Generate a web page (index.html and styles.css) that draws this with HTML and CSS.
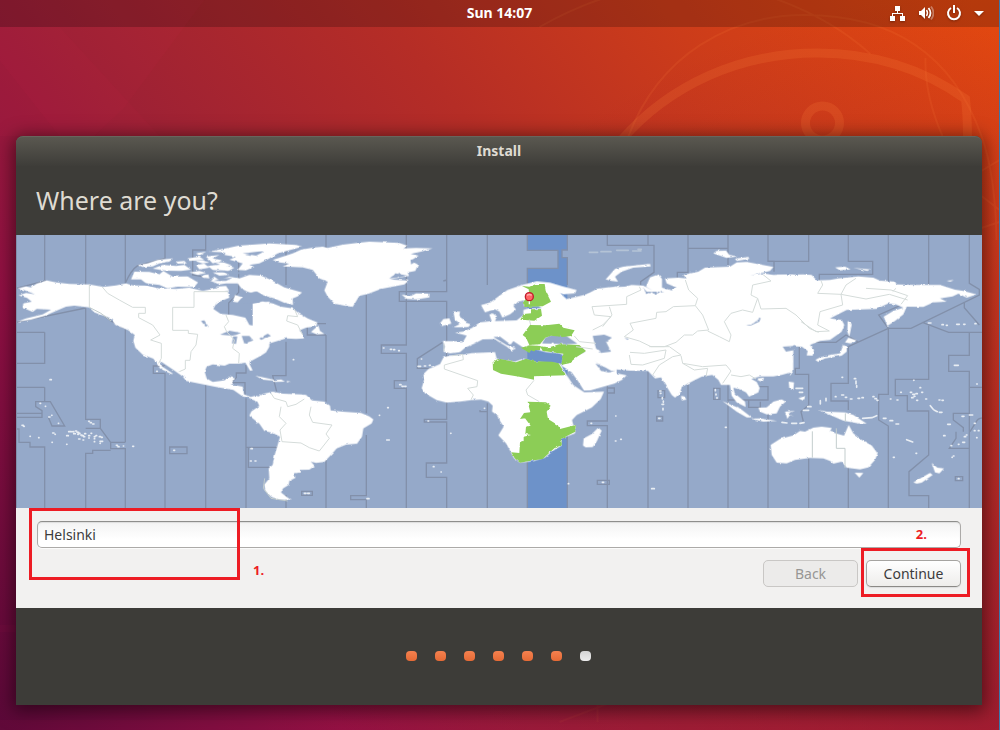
FILE: index.html
```html
<!DOCTYPE html>
<html lang="en">
<head>
<meta charset="utf-8">
<title>Install</title>
<link rel="stylesheet" href="styles.css">
</head>
<body>
<svg class="wallpaper" viewBox="0 0 1000 730" preserveAspectRatio="xMidYMid slice" aria-hidden="true">
  <path class="facet" d="M0 0H205L125 107L95 136H0z"/>
  <path class="facet" d="M0 60L60 136H160L60 27H0z"/>
  <path class="facet" d="M0 720H1000V730H0zM0 625H16V632H0z"/>
  <g class="line-art">
    <path class="thin" d="M540 27Q640-30 740-12Q820 8 871 54M629 136C660 55 730 15 805 15C900 15 955 60 982 136Q996 175 997 240M926 58Q925 95 943 136M980 172L1000 160M982 196L1000 210M982 228L1000 222"/>
    <path class="faint" d="M560 722L610 703M598 703V722"/>
    <path class="thick" d="M622 140C670 85 740 53 818 53C875 53 925 70 966 99Q968 115 968 140"/>
    <circle class="thick" cx="823" cy="123" r="17"/>
  </g>
</svg>

<header class="topbar">
  <time class="clock">Sun 14:07</time>
  <div class="indicators">
    <svg class="icon" width="16" height="16" viewBox="0 0 16 16" role="img" aria-label="Network"><path fill="#fff" d="M5 1h5v5H8v2h5v3h2v5h-5v-5h2V9H3v2h2v5H0v-5h2V8h5V6H5z"/></svg>
    <svg class="icon" width="16" height="16" viewBox="0 0 16 16" role="img" aria-label="Volume"><path fill="#fff" d="M1 6h2l4-4v12L3 10H1z"/><path fill="none" stroke="#fff" stroke-width="1.4" d="M8.500 5q2 3 0 6"/><path fill="none" stroke="#fff" stroke-width="1.800" d="M10.500 3q4 5 0 10"/><path fill="none" stroke="#fff" stroke-opacity=".35" stroke-width="1.800" d="M13 1.500q5 6.500 0 13"/></svg>
    <svg class="icon" width="16" height="16" viewBox="0 0 16 16" role="img" aria-label="Power"><path fill="none" stroke="#fff" stroke-width="2" d="M5 3A6 6 0 1 0 11 3M8 0V8"/></svg>
    <svg class="icon" width="10" height="16" viewBox="0 0 10 16" aria-hidden="true"><path fill="#fff" d="M0 6h10L5 11z"/></svg>
  </div>
</header>

<main class="desktop">
<section class="window">
  <div class="titlebar">Install</div>
  <h1 class="heading">Where are you?</h1>

  <svg class="map" viewBox="0 0 2898 819" role="img" aria-label="Time zone map">
    <rect class="sea" width="2898" height="819"/>
    <path class="selected" d="M1534 0H1654V45H1638V68H1654V819H1534V100H1626V46H1534z"/>
    <g class="zones">
      <path d="M1 0V819M86 0V140M86 292V385H0V292H86M86 457V500H59V515L78 527V547H0M0 457H86M86 500H103L146 573H108L97 547M0 535H78M0 582H9V622H42V636H86V819M209 0V150M209 218V553H253V580H209M253 580L284 622H328M284 622V641H328V819M284 646H230V655H209V819M328 0V145M328 282V622M328 145Q345 105 365 92L447 70V0M447 393H412V415H447V819M569 0V45H530V120L575 128M569 450V819M461 636H513V656H461zM690 390V414H661V428L645 443H687V480M690 490V819M690 637H785M697 637V697H760M668 35V172L638 204V260M0 160L90 137M0 262L209 219M255 235L285 258L325 280"/>
      <path d="M810 0V150M810 320V422H770L782 470M810 780V819M930 0V125M930 300V500M930 640V819M874 266H930M874 266V300H930M1051 180V535M1051 600V782H1004V794H1051V819M1171 0V330H1096V355H1171V437H1135V460H1171V819M1292 0V170H1150V199H1292V553H1225V561H1292V684H1231V727H1292V819M857 769H889V781H857zM1280 322L1204 371V400H1240M1282 138L1292 135"/>
      <path d="M1414 0V150M1414 505V530H1392V525M1414 530V819M1534 0V46H1626V100H1534V150M1534 665V819M1654 0V45H1638V68H1654V150M1654 468V819M1774 0V31H1914V112L1874 140V150M1774 452V558H1714V572H1774V819M1774 459H1795V474H1774M1744 736H1780V748H1744zM1896 0V31M1896 410V819M2016 0V40H2136V0M2016 40V112H1984V128M2016 440V819M2136 40V90M2136 440V495H2256V455H2230M2136 495V819M2198 495V517H2233V500M2256 0V79H2274V110M2256 520V819M1926 467H1946V488H1926zM1922 544H1940V558H1922zM2093 460H2112V493H2093z"/>
      <path d="M2256 79H2378V0M2497 0V79H2570V118H2410V135M2378 590V819M2497 600V819M2617 0V140M2617 280V478H2588V555L2617 573V819M2738 0V150M2738 272V433H2638V482H2674V528H2738V660L2679 710V782H2738V819M2860 0V145L2890 163V180L2685 280H2617L2588 240L2660 208M2719 262L2798 292H2898M2845 200V218L2890 270M2860 292V361H2798V409H2860V457H2898M2860 457V819M2350 335V400H2338V418H2378V510L2355 530L2362 560M2497 335V445H2445V498H2497V525M2497 335L2617 280M2380 322H2460L2490 300L2525 320M2860 535H2812V555L2842 578V590M2820 590V610L2800 640H2860M2898 549Q2885 550 2881 560L2862 590M2818 725H2840V737H2818z"/>
    </g>

    <g class="land" filter="url(#coast)">
      <path d="M5 160L30 154L45 157L62 146L92 136L120 142L160 147L220 148L262 156L300 151L330 145L350 151L395 152L430 160L480 162L520 158L560 168L600 160L636 170L640 188L602 204L592 222L614 237L650 240L688 248L700 270L716 273L722 262L718 242L737 235L727 215L742 203L760 199V335L750 352L735 362L703 379L700 386L710 406L702 407L688 383L670 386L640 386L626 392L590 388L572 395L566 410L572 430L590 441L625 436L640 426L657 430L645 448L680 455L684 478L704 486L720 482L736 488L730 500L712 492L680 484L652 465L600 456L570 450L510 438L500 424L470 403L432 378L438 394L472 417L465 417L432 400L412 371L380 359L358 338L352 318L356 300L335 285L298 270L285 250L235 232L220 217L175 212L150 215L120 228L88 242L45 254L2 261L30 250L80 238L105 224L62 222L50 231L20 218L22 205L47 200L33 189L8 181L30 174L58 178L23 165z"/>
      <path d="M345 133L355 110L400 111L430 118L442 108L470 125L515 124L546 142L535 156L485 155L455 160L430 150L390 145L375 133zM365 90L395 85L425 75L471 70L460 80L430 85L410 94L380 96zM410 101L440 90L480 93L505 90L525 104L495 108L450 107zM515 70L550 65L565 75L520 78zM540 55L570 50L550 62zM570 65L610 60L590 70L620 77L590 85zM578 50L640 38L668 32L760 25L840 30L859 35L815 47L785 55L760 70L730 85L700 90L715 96L690 106L665 105L680 85L640 74L660 66L625 60L630 52zM540 90L565 86L580 98L550 103zM575 93L620 88L655 98L635 110L590 105zM556 122L577 118L580 130L560 128zM582 137L595 125L612 138L640 125L670 130L700 120L735 122L765 135L805 157L858 172L845 184L830 190L831 210L804 203L775 190L743 181L723 170L705 174L680 165L665 145L630 145L610 148zM600 155L630 153L640 168L610 168zM657 180L680 187L665 202L650 200z"/>
      <path d="M535 78L560 76L580 82L560 85zM590 80L625 83L650 92L620 92zM520 112L550 108L570 114L545 120zM590 112L625 112L640 120L610 122zM610 45L640 44L660 50L630 56zM480 80L505 78L512 85L485 86z"/>
      <path d="M710 206L740 199L770 205L795 215L830 220L845 232L875 250L904 262L900 274L870 278L850 286L862 297L864 310L840 312L810 310L785 318L760 325L745 345L710 366zM885 291L907 271L912 288L925 297L903 298z"/>
      <path d="M770 75L830 55L855 44L890 38L920 35L935 39L980 29L1030 23L1060 20L1150 24L1175 33L1162 40L1200 39L1250 40L1215 50L1184 57L1208 62L1184 77L1206 89L1198 108L1175 112L1179 123L1122 133L1178 137L1165 148L1130 155L1095 162L1060 175L1030 183L1010 216L990 213L955 206L935 185L925 166L935 140L910 130L890 105L860 97L800 94L820 86L790 82zM1157 179L1185 183L1200 175L1240 176L1240 187L1200 193L1172 192z"/>
      <path d="M700 490L720 492L735 478L770 470L800 476L855 478L870 480L888 496L925 500L942 512L944 526L980 530L1035 534L1060 544L1072 553L1067 565L1042 580L1038 605L1023 626L990 629L962 640L945 660L925 681L900 684L885 680L896 693L880 704L850 705L853 712L835 715L838 729L820 738L818 750L801 760L795 772L812 786L824 794L790 795L765 785L748 768L745 748L760 730L758 700L770 690L776 660L785 630L792 605L770 594L745 588L730 566L710 550L700 542L706 529L730 513L724 500z"/>
      <path d="M718 422L770 433L780 438L740 434zM770 436L795 433L807 440L775 441zM812 438L824 440L814 443z"/>

      <g transform="translate(1152)">
        <path d="M128 318L190 319L200 302L165 293L190 290L215 279L240 262L275 258L268 239L278 235L291 244L285 258L350 256L370 240L370 225L385 220L425 219L415 213L372 214V196L355 200L340 213L348 224L330 238L307 248L298 230L285 223L255 232L243 210L270 203L300 181L322 165L365 150L410 139L450 143L485 153L530 165L525 175L490 178L480 174L500 192L545 182L600 166L650 155V440L575 360L550 348L530 362L503 390L484 388L490 365L470 355L440 352L415 345L388 350L365 335L340 318L332 329L300 305L280 306L320 330L348 340L335 347L320 335L283 312L248 313L225 325L196 338L180 351L150 355L130 350L135 335zM160 230L180 230L178 242L190 250L197 263L212 268L205 276L160 277L178 268L173 260L165 255zM120 265L130 252L148 250L154 266L125 273z"/>
        <path d="M148 362L182 360L215 354L285 351L290 371L310 375L345 380L370 371L400 378L440 382L480 386L500 420L520 450L553 472L612 470L602 492L575 518L530 540L516 555L520 570L527 574L525 595L485 610L485 632L462 645L435 668L400 678L360 683L342 670L333 652L318 625L295 601L311 575L300 558L297 545L276 530L278 512L265 500L243 494L215 495L180 500L140 503L110 495L75 475L65 460L72 435L67 420L85 402L120 387L130 368z"/>
        <path d="M482 391L503 384L530 362L560 348L600 392L625 410L680 421L665 435L643 446L572 466L552 467L535 440L515 412zM549 632L551 610L575 597L595 578L605 587L590 620L578 636L557 637z"/>
      </g>
      <g transform="translate(1722)">
        <path d="M-10 178L20 162L52 157L105 155L125 150L160 152L190 168L168 155L180 127L205 118L216 132V158L245 166L260 158L230 145L225 130L265 128L290 130L280 120L325 110L345 98L420 95L440 82L470 81L550 96L540 108L480 122L520 115L550 120L610 119V410L575 420L550 424L510 424L484 432L500 441L509 459L505 472L477 485L468 472L450 463L430 458L434 475L465 500L467 516L440 502L425 482L420 450L393 450L385 435L367 420L335 425L305 440L275 456L270 475L255 488L245 480L224 445L213 427L195 430L174 408L120 407L85 404L58 400L40 394L20 384L0 370L-10 358z"/>
        <path d="M47 133L75 102L100 95L150 90L180 87L182 94L130 98L95 110L75 125L84 140L65 138zM380 48L408 47L418 60L443 64L410 69L370 55zM435 71L475 66L478 72L440 78zM273 483L283 484L289 494L275 496zM397 498L420 508L450 520L485 547L470 547L440 530zM482 551L510 550L562 558L520 560zM505 518L530 517L550 500L575 493L587 500L570 515L560 535L530 538L510 530zM503 430L522 428L518 440L505 437z"/>
      </g>
      <g transform="translate(2292)">
        <path d="M-10 120L70 118L95 120L110 136L150 135L175 130L235 124L280 128L300 137L345 140L350 148L405 150L480 150L525 164L550 168L590 178L560 188L535 176L518 184L480 190L500 200L460 202L430 216L380 215L370 238L345 258L322 273L311 245L340 228L370 218L348 208L325 205L290 222L200 225L150 250L185 255L193 270L185 290L150 315L120 318L90 330L102 345L98 362L80 361L83 348L65 335L45 334L5 342L30 360L38 380L20 405L-10 415z"/>
        <path d="M-25 660L-28 630L0 612L40 601L60 588L75 590L100 578L125 575L155 579L150 590L192 602L206 570L220 595L245 615L275 631L293 655L285 675L265 697L240 703L200 698L185 680L160 686L150 678L130 670L90 669L45 675L20 685L-10 683zM224 713L250 714L238 728zM400 742L430 725L450 714L458 720L425 743L410 746zM455 684L472 698L492 700L478 715L465 712zM106 375L120 367L150 360L180 355L190 330L200 335L200 350L185 362L135 370L115 381zM195 322L205 308L230 316L212 325zM203 257L215 270L208 305L202 290zM115 525L140 530L195 532L220 540L260 566L235 565L190 557L150 540zM15 530L45 528L25 535L42 545L30 540L22 552zM26 440L42 442L40 465L28 460zM30 410L40 408L30 423zM55 490L75 483L72 498zM165 97L195 95L212 103L180 106zM220 99L270 103L262 108zM500 137L525 135L510 140z"/>
      </g>
    </g>

    <g class="water" filter="url(#coast)">
      <path d="M555 258L565 256L578 276L568 274zM612 299L640 287L675 294L660 300L648 302zM648 325L651 304L664 304L660 327zM677 303L700 303L712 316L685 326zM730 310L755 296L765 303L735 315z"/>
      <path d="M685 178L720 170L740 181L730 203L665 205zM350 140L395 146L430 158L400 153zM592 138L620 130L650 128L630 138zM680 55L750 47L720 62zM600 105L680 112L700 105L715 112L650 118zM1184 74L1200 79L1185 88zM1120 130L1140 115L1175 122L1150 128z"/>
      <path d="M1578 325L1588 308L1612 299L1650 302L1684 326L1650 328L1610 326zM1590 545L1600 560L1594 552zM1730 303L1765 299L1788 308L1770 320L1785 350L1755 354L1740 340zM1738 385L1768 397L1790 410L1800 405L1780 413L1755 408zM2190 271L2212 265L2235 247L2230 260L2205 271zM2300 335L2335 333L2338 345L2310 350zM1825 309L1838 311L1835 315zM1880 157L1892 170L1945 170L1920 176L1890 174z"/>
      <path class="selected" d="M1536 353L1550 338L1580 355L1630 355L1642 360L1632 380L1600 382L1540 374z"/>
    </g>

    <g class="chosen" filter="url(#coast)">
      <path d="M1518 153L1540 155L1560 147H1586L1590 170L1605 200L1580 214L1525 216L1524 198L1540 180L1538 163zM1523 237L1545 235L1545 223L1575 222L1578 242L1555 257L1513 254zM1520 300L1542 270L1590 271L1630 266L1642 278L1676 286L1665 303L1640 306L1605 302L1588 308L1572 328L1540 330L1530 308zM1515 338L1540 331L1574 333L1572 345L1545 346L1540 354zM1572 334L1600 337L1630 328L1690 330L1710 348L1683 365L1660 385L1635 390L1642 356L1610 352L1580 348zM1430 378L1450 371L1500 382L1530 371L1555 379L1608 380L1628 385L1650 421L1554 424V434L1510 425L1455 416L1431 405zM1535 500L1590 502L1604 512L1592 530L1596 552L1625 570L1632 582L1679 570L1678 590L1635 612L1638 630L1615 640L1580 672L1545 677L1512 683L1496 670L1486 652L1510 654L1512 622L1523 618V605L1545 600L1528 597L1530 575L1544 572L1527 550L1512 552L1524 534L1543 532z"/>
    </g>

    <g class="borders">
      <path d="M220 148V218M258 155L275 175L310 195L350 217H388V235H368V248L410 270L432 300L404 315L436 325V370L428 385M636 170H534V217H470V286H517V295L545 298L540 330L525 350L522 376H508V402L490 410M630 240L638 260L625 275L632 290L655 315L650 340L670 355L668 385M835 222L845 245L815 242L812 258L845 270L860 300M765 475L775 490L810 500L815 515L840 508L865 492M795 515L790 545L810 565L792 585L798 620L855 624L880 638L910 648L940 610L930 597L948 570L890 562L880 540L885 515"/>
      <path d="M1284 325V348M1308 362L1340 358L1342 374L1285 390L1285 402L1385 437L1383 455L1355 460L1372 480L1365 494M1554 436L1530 465L1535 480L1570 500M1540 254L1544 270M1675 303L1690 320L1740 325M1870 155L1875 165L1832 185V208L1728 215L1735 240L1785 245L1760 270L1730 285M1780 215L1788 240L1760 275M1680 335L1730 342M2008 135L2018 165L2045 190L2038 212L1972 215L1950 230L1922 232L1920 250L1842 265L1852 285L1825 305L1870 318L1905 335L1945 335L1980 322L2005 300L2030 300L2045 288L2078 285L2060 240L2038 212M2075 288L2110 305L2140 320L2145 300L2125 260L2145 235L2180 225L2210 232L2225 190L2205 180L2210 150L2265 138L2240 118M2225 190L2235 222L2310 220L2340 240L2380 280L2408 292M2550 160L2625 165L2675 182L2655 208M2640 160L2630 170M2355 260L2400 290L2440 288L2405 270L2412 230L2480 210L2475 178L2405 175L2420 150L2415 137M2475 178L2490 150L2520 130M2475 178L2550 192L2620 178L2675 195M1842 352L1885 355L1950 345L1945 370L1880 390L1845 388L1840 360M1900 335H1960L1995 360L1970 365L1930 390L1910 420M1995 362L2000 385L2060 395L2130 390L2145 408L2120 445M2000 385L2035 405L2075 400L2070 425M2145 420L2175 425L2200 420L2220 432"/>
      <path class="shore" d="M220 217L255 235L285 258M2389 589V668M2461 580V640H2487V698M2488 535V560M746 730L742 760L765 790L815 798"/>
    </g>

    <path class="islets" d="M422 409h2M102 434h4M72 505h2M88 514h1M98 546h4M107 541h1M127 565h1M18 571h4M23 574h2M42 604h1M68 608h1M110 594h4M117 598h1M108 622h1M152 602h5M152 628h1M158 590h8M170 590h3M173 596h5M178 588h4M183 592h5M185 598h3M188 595h4M194 600h4M198 602h4M203 605h3M206 596h3M218 602h3M225 595h2M218 609h2M235 605h2M235 611h1M235 620h1M240 602h2M250 605h4M256 607h3M188 612h4M201 615h2M252 619h8M252 625h1M218 559h2M223 563h3M230 567h4M301 631h3M306 635h3M322 633h1M350 634h3M473 646h3M705 641h4M703 678h3M717 678h3M832 374h1M1102 339h2M1123 343h4M1133 344h3M1148 347h2M1151 449h4M1158 454h4M1166 454h4M1090 541h1M1115 518h2M1112 615h8M1053 791h6M865 775h5M875 775h5M1216 372h1M1206 394h8M1225 393h4M1240 391h3M1236 558h2M1304 595h1M1252 695h2M1275 711h1M1405 520h1M1657 746h1M1759 742h4M1725 565h2M1799 543h1M1798 618h2M1814 613h2M1907 761h8M1928 550h4M1931 468h4M1933 475h2M1939 488v4M1942 498v4M1938 508h5M1941 520v5M2098 464v3M2100 477v3M2103 488v2M2128 577h3M2478 427h2M2515 431h4M2520 438v8M2522 452v5M2477 480h6M2458 485h2M2488 487h4M2503 492h5M2526 490h5M2538 488h4M2571 485h3M2577 491h4M2583 496h3M2623 492h2M2643 495h3M2654 472h2M2683 472h4M2690 478h6M2694 484h3M2700 476h4M2687 488h4M2702 496h3M2717 472h3M2693 436h1M2712 458h2M2729 492h3M2769 495h3M2778 496h4M2743 512l8 10M2754 525l10 5M2770 532h8M2672 614l18 7M2602 550h8M2622 557h8M2640 567h8M2700 655h2M2632 667h3M2783 602h4M2795 568h8M2812 663h2M2808 667h1M2838 544h6M2860 540h10M2840 622h6M2845 605h4M2827 628h2M2805 632h2M2851 600h2M2875 565h3M2875 587h2M2887 587h2M2882 608h1M2882 447h2M2815 391h12M2827 731h2M2737 264h8M2778 269h4M2791 271h3M2822 268h8M2843 268h4M2877 266h3M2298 562l15 2M2327 565l15 0M2352 565l12-2M2340 460h20M2350 472h10M2375 515h10M2362 526h16M2413 497v10M2430 490v7M2540 550l28 -2 14-6"/>
    <path class="islets dim" d="M1720 52h25M1755 50h30M1802 46h35M1850 48h25M1866 43h10"/>

    <g class="pin"><path d="M1540 198V208"/><circle cx="1540" cy="185" r="12"/><path class="shine" d="M1533 181Q1540 176 1547 181"/></g>
    <defs><filter id="coast" x="0" y="0" width="100%" height="100%"><feTurbulence type="fractalNoise" baseFrequency=".07" numOctaves="2" seed="4"/><feDisplacementMap in="SourceGraphic" scale="7" xChannelSelector="R" yChannelSelector="G"/></filter></defs>
  </svg>

  <form class="form">
    <input class="location" type="text" value="Helsinki" aria-label="Location">
    <div class="actions">
      <button class="button" type="button" disabled>Back</button>
      <button class="button" type="button">Continue</button>
    </div>
    <span class="mark mark-location"></span><strong class="step step-one">1.</strong>
    <span class="mark mark-continue"></span><strong class="step step-two">2.</strong>
  </form>

  <div class="progress" role="img" aria-label="Step 6 of 7">
    <i class="dot"></i><i class="dot"></i><i class="dot"></i><i class="dot"></i><i class="dot"></i><i class="dot"></i><i class="dot dot-pending"></i>
  </div>
</section>
</main>
</body>
</html>
```

FILE: styles.css
```css
* { box-sizing: border-box; }

body {
  margin: 0;
  min-height: 100vh;
  position: relative;
  overflow: hidden;
  border-right: 1px solid #3878ac;
  background:
    radial-gradient(circle at 100% 100%, rgba(140, 15, 55, .6), rgba(140, 15, 55, 0) 60%),
    linear-gradient(52deg, #5a0838 0%, #911043 22%, #9c2036 38%, #b52d26 60%, #cc3c1a 78%, #e4490f 98%);
  font-family: "Noto Sans", "Open Sans", sans-serif;
}

.wallpaper {
  position: absolute;
  inset: 0;
  width: 100%;
  height: 100%;
}
.facet { fill: rgba(255, 50, 100, .04); }
.line-art { fill: none; stroke: #ff853e; }
.thin { stroke-width: 2; stroke-opacity: .13; }
.faint { stroke-width: 2; stroke-opacity: .06; }
.thick { stroke-width: 9; stroke-opacity: .18; }

.topbar {
  position: relative;
  display: grid;
  grid-template-columns: 1fr auto 1fr;
  align-items: center;
  height: 27px;
  padding: 0 15px;
  background: rgba(0, 0, 0, .2);
  color: #fff;
}
.clock {
  grid-column: 2;
  font: bold 14px/26px "Noto Sans", sans-serif;
  height: 27px;
}
.indicators {
  display: flex;
  justify-content: flex-end;
  align-items: center;
  gap: 12px;
  padding-bottom: 1px;
}
.icon {
  display: block;
  filter: drop-shadow(0 1px 1px rgba(0, 0, 0, .3));
}

.desktop {
  position: relative;
  padding: 109px 17px 25px 16px;
}
.window {
  border-radius: 7px 7px 0 0;
  background: #3d3c38;
  box-shadow: 0 3px 18px 3px rgba(0, 0, 0, .5);
}
.titlebar {
  height: 30px;
  border-radius: 7px 7px 0 0;
  border-top: 1px solid #68655d;
  background: linear-gradient(#5a5850, #3e3d39);
  color: #dfdbd2;
  font-size: 14px;
  line-height: 28px;
  font-weight: bold;
  text-align: center;
}
.heading {
  margin: 0;
  padding: 17px 20px 18px;
  color: #dfdbd2;
  font-size: 25px;
  line-height: 34px;
  font-weight: 400;
}

.map {
  display: block;
  width: 100%;
  height: auto;
}
.sea { fill: #95a9c9; }
.water { fill: #95a9c9; }
.selected { fill: #6d92c9; }
.zones { fill: none; stroke: #8290aa; stroke-width: 4; }
.land { fill: #fff; }
.chosen { fill: #8ccd57; }
.borders { fill: none; stroke: #d5dcda; stroke-width: 3; stroke-linejoin: round; }
.shore { stroke: #c3cdcd; }
.islets { fill: none; stroke: #e8edf3; stroke-width: 5; stroke-linecap: round; }
.dim { stroke: #b4c3d6; }
.pin { fill: #f66; stroke: #c11c2c; stroke-width: 4; }
.pin path { stroke: #fff; }
.pin .shine { fill: none; stroke: #ffaaa9; }

.form {
  position: relative;
  padding: 13px 21px 21px;
  background: #f2f1f0;
}
.location {
  display: block;
  width: 100%;
  height: 27px;
  padding: 0 6px;
  border: 1px solid #acaaa8;
  border-top-color: #8e8e8c;
  border-radius: 5px;
  background: linear-gradient(#f3f3f3, #fff 70%);
  box-shadow: inset 0 1px 1px #ddd, 0 1px #fbfbfb;
  color: #3c3c3c;
  font: 14px/20px "Noto Sans", sans-serif;
}
.actions {
  display: flex;
  justify-content: flex-end;
  gap: 8px;
  margin-top: 12px;
}
.button {
  width: 95px;
  height: 27px;
  padding: 0;
  border: 1px solid #a6a4a1;
  border-bottom-color: #8b8986;
  border-radius: 5px;
  background: linear-gradient(#fff, #eeedeb);
  box-shadow: 0 1px 1px #ddd;
  color: #3c3c3c;
  font: 14px/20px "Noto Sans", sans-serif;
}
.button:disabled {
  border-color: #c9c7c5;
  background: #ecebea;
  box-shadow: none;
  color: #979694;
}

.mark {
  position: absolute;
  border: 3px solid #ed1c24;
  pointer-events: none;
}
.mark-location { left: 13px; top: 0; width: 211px; height: 72px; }
.mark-continue { right: 12px; top: 40px; width: 109px; height: 49px; }
.step {
  position: absolute;
  color: #ed1c24;
  font: bold 13px/16px "Open Sans", sans-serif;
}
.step-one { left: 237px; top: 54px; }
.step-two { right: 55px; top: 18px; }

.progress {
  display: flex;
  justify-content: center;
  gap: 18px;
  padding: 43px 2px 44px 0;
}
.dot {
  width: 11px;
  height: 10px;
  border-radius: 4px;
  background: linear-gradient(#f5814f, #e66a35);
}
.dot-pending { background: linear-gradient(#d4d4d4, #ececec); }
```
